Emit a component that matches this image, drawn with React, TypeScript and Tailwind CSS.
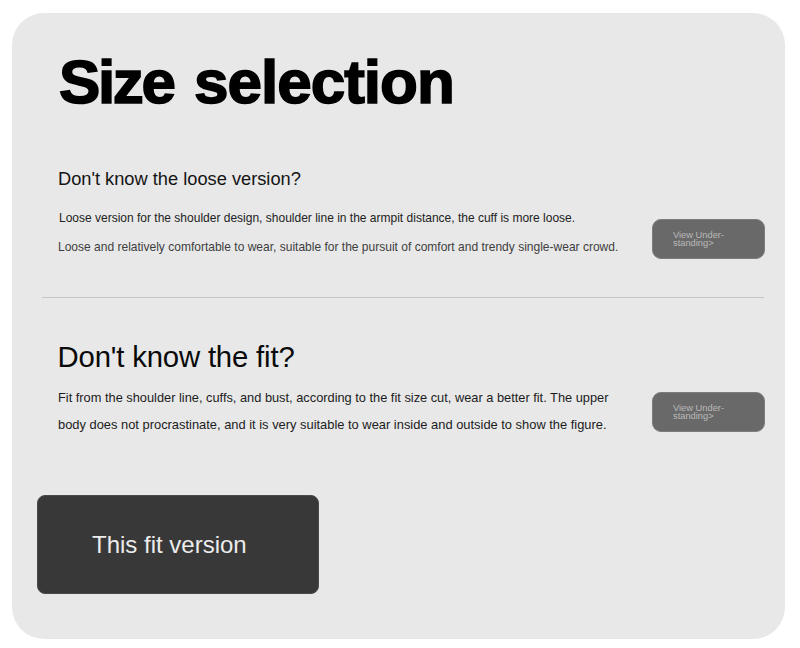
import React from "react";

const ViewButton: React.FC = () => (
  <button className="w-[113px] h-[40px] shrink-0 rounded-[9px] border border-[#7d7d7d] bg-[#696969] pl-[20px] text-left text-[9.6px] leading-[8px] text-[#b9b9b9]">
    <span className="block whitespace-nowrap origin-left scale-x-[0.97]">View Under-</span>
    <span className="block whitespace-nowrap origin-left scale-x-[0.97]">standing&gt;</span>
  </button>
);

const App: React.FC = () => {
  return (
    <div className="w-[800px] h-[648px] overflow-hidden bg-white pl-[12px] pt-[13px] font-['Liberation_Sans',Arial,sans-serif] whitespace-nowrap">
      <main className="flex flex-col w-[773px] h-[626px] rounded-[32px] bg-[#e8e8e8] pt-[33px]">
        <h1 className="flex h-[70px] pl-[47px] text-[62px] leading-[71px] font-bold text-black [-webkit-text-stroke:1.6px_black]">
          <span className="w-[135px] tracking-[-2.4px]">Size</span>
          <span className="tracking-[-1px]">selection</span>
        </h1>

        <section className="mt-[48px] flex h-[133px] pl-[45.5px]">
          <div className="w-[594.5px]">
            <h2 className="h-[30px] origin-left scale-x-[0.951] text-[19.2px] leading-[30px] text-[#141414]">Don't know the loose version?</h2>
            <p className="mt-[9px] h-[30px] origin-left scale-x-[0.953] pl-px text-[12.6px] leading-[30px] text-[#222]">
              Loose version for the shoulder design, shoulder line in the armpit distance, the cuff is more loose.
            </p>
            <p className="h-[28px] origin-left scale-x-[0.954] text-[12.6px] leading-[28px] text-[#3e3e3e]">
              Loose and relatively comfortable to wear, suitable for the pursuit of comfort and trendy single-wear crowd.
            </p>
          </div>
          <div className="pt-[55px]">
            <ViewButton />
          </div>
        </section>

        <hr className="ml-[30px] w-[722px] border-t border-[#c4c4c4]" />

        <section className="mt-[39px] flex h-[120px] pl-[45.5px]">
          <div className="w-[594.5px]">
            <h2 className="h-[40px] text-[29.3px] leading-[40px] tracking-[-0.16px] text-[#0a0a0a]">Don't know the fit?</h2>
            <p className="mt-[7px] pl-[0.5px] text-[13px] leading-[27px] text-[#1c1c1c]">
              <span className="block origin-left scale-x-[0.985]">Fit from the shoulder line, cuffs, and bust, according to the fit size cut, wear a better fit. The upper</span>
              <span className="block origin-left scale-x-[0.991]">body does not procrastinate, and it is very suitable to wear inside and outside to show the figure.</span>
            </p>
          </div>
          <div className="pt-[55px]">
            <ViewButton />
          </div>
        </section>

        <button className="ml-[25px] mt-[38px] w-[282px] h-[99px] rounded-[8px] border border-[#4a4a4a] bg-[#383838] pl-[54px] text-left text-[24px] text-[#ececec]">
          This fit version
        </button>
      </main>
    </div>
  );
};

export default App;
